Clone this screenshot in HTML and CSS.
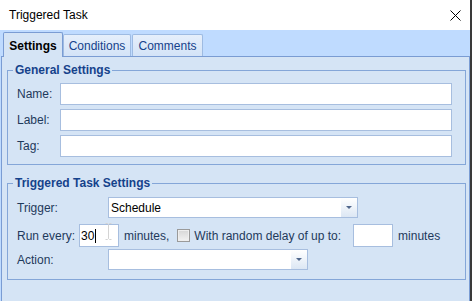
FILE: index.html
```html
<!DOCTYPE html>
<html lang="en">
<head>
    <meta charset="UTF-8">
    <meta name="viewport" content="width=device-width, initial-scale=1.0">
    <title>Triggered Task</title>
    <link rel="stylesheet" href="styles.css">
</head>
<body>
    <div class="window">
        <!-- Title bar -->
        <div class="titlebar">
            <span class="title">Triggered Task</span>
            <svg class="close" width="11" height="11" viewBox="0 0 11 11">
                <path d="M0.5 0.5 L10.5 10.5 M10.5 0.5 L0.5 10.5" stroke="#000" stroke-width="1" fill="none"/>
            </svg>
        </div>

        <!-- Tabs -->
        <div class="tabstrip">
            <div class="tab active">Settings</div>
            <div class="tab tab-conditions">Conditions</div>
            <div class="tab tab-comments">Comments</div>
        </div>

        <div class="panel">
            <fieldset class="group general">
                <legend>General Settings</legend>
                <div class="form-grid">
                    <label class="lbl">Name:</label>
                    <div class="textbox"></div>
                    <label class="lbl">Label:</label>
                    <div class="textbox"></div>
                    <label class="lbl">Tag:</label>
                    <div class="textbox"></div>
                </div>
            </fieldset>

            <fieldset class="group triggered">
                <legend>Triggered Task Settings</legend>

                <div class="row row-trigger">
                    <span class="lbl lbl-wide">Trigger:</span>
                    <div class="combo combo-trigger">
                        <span class="combo-text">Schedule</span>
                        <span class="drop"><span class="arrow"></span></span>
                    </div>
                </div>

                <div class="row row-run">
                    <span class="lbl lbl-run">Run every:</span>
                    <div class="textbox small focused">
                        <span>30</span><span class="caret"></span>
                        <svg class="ibeam" width="7" height="17" viewBox="0 0 7 17">
                            <path d="M0.5 0.5 H2.5 L3.5 1.5 L4.5 0.5 H6.5 M3.5 1.5 V15.5 M0.5 16.5 H2.5 L3.5 15.5 L4.5 16.5 H6.5" stroke="#d4d4d4" stroke-width="1" fill="none"/>
                        </svg>
                    </div>
                    <span class="txt minutes-a">minutes,</span>
                    <span class="checkbox"></span>
                    <span class="txt delay">With random delay of up to:</span>
                    <div class="textbox small"></div>
                    <span class="txt minutes-b">minutes</span>
                </div>

                <div class="row row-action">
                    <span class="lbl lbl-wide">Action:</span>
                    <div class="combo combo-action">
                        <span class="combo-text"></span>
                        <span class="drop"><span class="arrow"></span></span>
                    </div>
                </div>
            </fieldset>
        </div>
    </div>
</body>
</html>
```

FILE: styles.css
```css
/* Page and window frame */
body {
    margin: 0;
    background-color: #3a3a3a;
    font-family: "Liberation Sans", Arial, sans-serif;
    font-size: 12px;
}

.window {
    width: 470px;
    height: 301px;
    background-color: #bfdbff;
    display: flex;
    flex-direction: column;
    overflow: hidden;
}

/* Title bar */
.titlebar {
    height: 30px;
    background-color: #ffffff;
    display: flex;
    align-items: center;
    justify-content: space-between;
    padding: 0 9px;
    flex-shrink: 0;
}

.title {
    color: #000000;
}

/* Tabs */
.tabstrip {
    height: 26px;
    display: flex;
    align-items: flex-end;
    padding-left: 3px;
    flex-shrink: 0;
}

.tab {
    box-sizing: border-box;
    height: 22px;
    padding-top: 3px;
    line-height: 16px;
    text-align: center;
    color: #15428b;
    border: 1px solid #9ebbe2;
    border-bottom: none;
    border-radius: 2px 2px 0 0;
    background: linear-gradient(#e6effb, #d3e3f7);
}

.tab.active {
    width: 60px;
    height: 25px;
    padding-top: 5px;
    margin-bottom: -1px;
    font-weight: bold;
    color: #000000;
    background: #d5e4f5;
    border-color: #7a9cd3;
    position: relative;
    z-index: 1;
}

.tab-conditions {
    width: 68px;
}

.tab-comments {
    width: 71px;
    margin-left: 1px;
}

/* Content panel */
.panel {
    flex: 1;
    margin-left: 1px;
    background-color: #d5e4f5;
    border: 1px solid #7a9cd3;
    border-bottom: none;
    padding: 5px 3px 0 5px;
}

/* Group boxes */
.group {
    margin: 0;
    border: 1px solid #84a6d8;
    padding: 5px 13px 7px 9px;
    min-width: 0;
}

.group legend {
    padding: 0 2px;
    margin-left: -4px;
    line-height: 16px;
    font-weight: bold;
    color: #15428b;
}

.triggered {
    margin-top: 10px;
    padding-top: 6px;
    padding-bottom: 9px;
}

.form-grid {
    display: grid;
    grid-template-columns: 43px 1fr;
    grid-auto-rows: 22px;
    row-gap: 4px;
    align-items: center;
}

.lbl {
    color: #1e395b;
}

.textbox {
    box-sizing: border-box;
    height: 22px;
    background-color: #ffffff;
    border: 1px solid #a7bedf;
}

/* Triggered task rows */
.row {
    display: flex;
    align-items: center;
}

.row-trigger {
    height: 21px;
    margin-bottom: 6px;
}

.row-run {
    height: 23px;
    margin-bottom: 2px;
}

.row-action {
    height: 21px;
}

.lbl-wide {
    width: 91px;
}

.lbl-run {
    width: 62px;
}

.txt {
    color: #1e395b;
}

.textbox.small {
    width: 40px;
    height: 23px;
    padding-left: 1px;
    display: flex;
    align-items: center;
    position: relative;
    color: #000000;
}

.caret {
    width: 1px;
    height: 14px;
    background-color: #000000;
    margin-left: 1px;
}

.ibeam {
    position: absolute;
    left: 25px;
    top: -2px;
}

.minutes-a {
    margin-left: 5px;
}

.checkbox {
    box-sizing: border-box;
    width: 13px;
    height: 13px;
    margin-left: 8px;
    border: 1px solid #9a9a9a;
    background: linear-gradient(#d6d6d6, #f2f2f2);
    box-shadow: inset 0 0 0 1px #eeeeee;
}

.delay {
    margin-left: 4px;
    margin-right: 12px;
}

.minutes-b {
    margin-left: 5px;
}

/* Combo boxes */
.combo {
    box-sizing: border-box;
    height: 21px;
    background-color: #ffffff;
    border: 1px solid #a7bedf;
    display: flex;
    align-items: center;
}

.combo-trigger {
    width: 250px;
}

.combo-action {
    width: 200px;
}

.combo-text {
    flex: 1;
    padding-left: 2px;
    color: #000000;
}

.drop {
    width: 16px;
    height: 100%;
    background: linear-gradient(#ffffff, #dce7f4);
    display: flex;
    align-items: center;
    justify-content: center;
}

.arrow {
    width: 0;
    height: 0;
    border-left: 3px solid transparent;
    border-right: 3px solid transparent;
    border-top: 3px solid #50678c;
}
```
